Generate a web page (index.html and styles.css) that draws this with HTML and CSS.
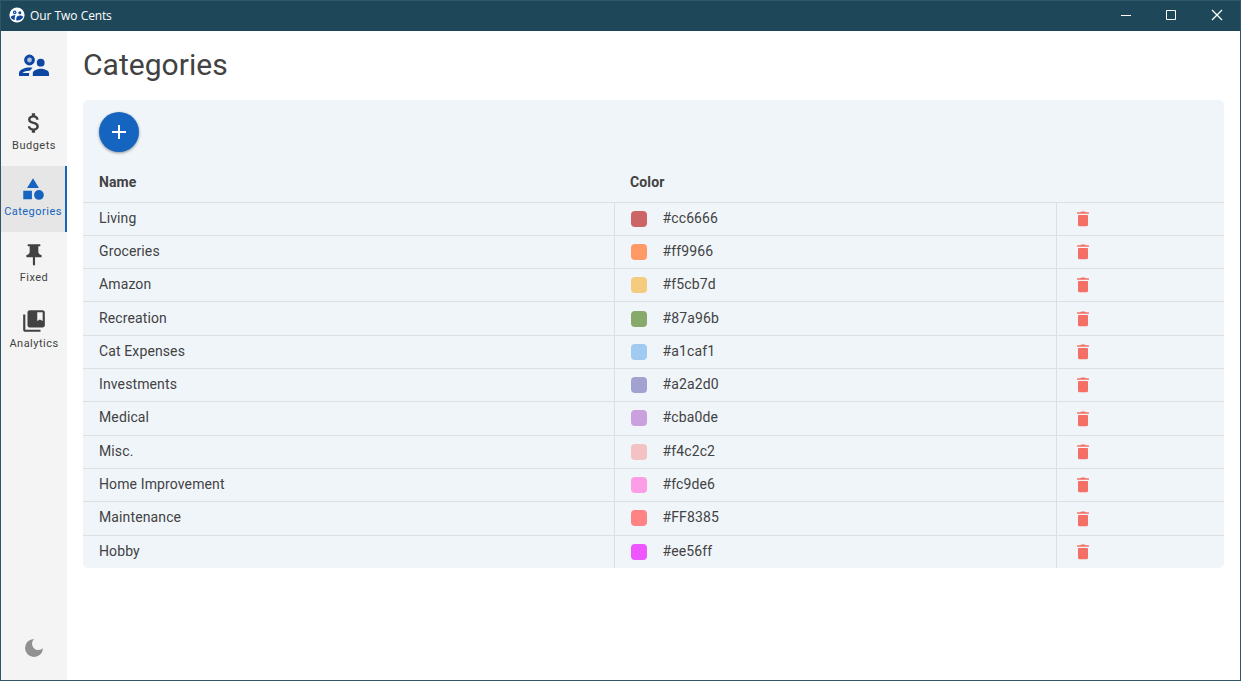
FILE: index.html
```
<!DOCTYPE html>
<html lang="en">
<head>
<meta charset="utf-8">
<title>Our Two Cents</title>
<link rel="stylesheet" href="styles.css">
</head>
<body>
<div class="window">
  <header class="titlebar">
    <svg class="app-icon" viewBox="0 0 16 16"><circle cx="8" cy="8" r="7.6" fill="#fff"/><g fill="#0d47a1"><circle cx="5.7" cy="5.4" r="1.8"/><circle cx="10.8" cy="5.7" r="1.5"/><path d="M1.700 9.900c1-1.400 2.800-1.800 5.100-1.600-.8.700-1.100 1.700-1.100 4.600C3.800 12.600 2.200 11.600 1.700 9.900zM7.300 13.500v-2.500c0-1.600 2-2.500 3.500-2.500 1.300 0 2.700.4 3.400 1.200-.9 2.400-3.200 4-6.900 3.800z"/></g><circle cx="5.700" cy="5.400" r=".6" fill="#fff"/></svg>
    <span class="app-name">Our Two Cents</span>
    <div class="controls">
      <svg width="12" height="12" viewBox="0 0 12 12"><path d="M1 6.500h10"/></svg>
      <svg width="12" height="12" viewBox="0 0 12 12"><path d="M1.500 1.500h9v9h-9z"/></svg>
      <svg width="12" height="12" viewBox="0 0 12 12"><path d="M1 1l10 10M11 1L1 11"/></svg>
    </div>
  </header>
  <div class="body">
    <nav class="sidebar">
      <svg class="logo" viewBox="0 0 30 22"><circle cx="10.500" cy="6" r="3.900" fill="#b4c3df" stroke="#0d47a1" stroke-width="3"/><g fill="#0d47a1"><circle cx="21.700" cy="8.700" r="3.900"/><path d="M0 22v-2.800c0-3.800 6.500-5.700 10.500-5.700 1 0 2 .1 3.100.300l-2.800 3c-3.500-.2-6.500 1-7.300 2.200h6.800c-.2.600-.3 1.200-.3 3zM13.800 22v-2.500c0-3.200 5-4.700 8.100-4.700s8.100 1.500 8.100 4.700V22z"/></g></svg>
      <a class="item"><svg viewBox="0 0 24 24"><path d="M11.800 10.900c-2.270-.59-3-1.200-3-2.150 0-1.090 1.010-1.850 2.700-1.850 1.780 0 2.440.85 2.500 2.100h2.210c-.07-1.720-1.120-3.300-3.210-3.810V3h-3v2.160c-1.940.42-3.500 1.680-3.500 3.610 0 2.310 1.910 3.460 4.700 4.130 2.500.6 3 1.480 3 2.410 0 .69-.49 1.790-2.700 1.790-2.060 0-2.870-.92-2.980-2.100h-2.200c.12 2.190 1.760 3.420 3.680 3.830V21h3v-2.150c1.950-.37 3.500-1.500 3.500-3.550 0-2.840-2.430-3.810-4.700-4.400z"/></svg><span>Budgets</span></a>
      <a class="item active"><svg viewBox="0 0 24 24"><path d="M12 2l-5.500 9h11zM3 13.500h8v8H3z"/><circle cx="17.500" cy="17.500" r="4.500"/></svg><span>Categories</span></a>
      <a class="item"><svg viewBox="0 0 24 24"><path d="M16 9V4h1c.55 0 1-.45 1-1s-.45-1-1-1H7c-.55 0-1 .45-1 1s.45 1 1 1h1v5c0 1.660-1.340 3-3 3v2h5.970v7l1 1 1-1v-7H19v-2c-1.660 0-3-1.340-3-3z"/></svg><span>Fixed</span></a>
      <a class="item"><svg viewBox="0 0 24 24"><path d="M4 6H2v14c0 1.100.9 2 2 2h14v-2H4V6zM20 2H8c-1.100 0-2 .9-2 2v12c0 1.100.9 2 2 2h12c1.100 0 2-.9 2-2V4c0-1.100-.9-2-2-2zm0 10l-2.500-1.500L15 12V4h5v8z"/></svg><span>Analytics</span></a>
      <svg class="moon" viewBox="0 0 18 18"><path d="M9 0a9 9 0 1 0 9 9.300A5.600 5.600 0 0 1 9 0z"/></svg>
    </nav>
    <main class="content">
      <h1>Categories</h1>
      <section class="card">
        <button class="add" aria-label="Add"><svg width="14" height="14" viewBox="0 0 14 14"><path d="M7 0v14M0 7h14"/></svg></button>
        <div class="head"><span>Name</span><span>Color</span></div>
        <div class="rows" id="rows"></div>
      </section>
    </main>
  </div>
</div>
<script src="app.js"></script>
</body>
</html>
```
FILE: styles.css
```
* { box-sizing: border-box; }
body { margin: 0; font-family: Roboto, sans-serif; color: #424242; }
.window { width: 1241px; height: 681px; border: 1px solid #2d5666; border-top: 0; background: #fff; display: flex; flex-direction: column; overflow: hidden; }
.titlebar { height: 31px; flex: none; background: #1e485a; border-top: 1px solid #2f5968; color: #fff; display: flex; align-items: center; padding: 0 17px 2px 8px; }
.app-icon { width: 16px; height: 16px; }
.app-name { font: 12px "Open Sans", sans-serif; margin-left: 5px; letter-spacing: -.45px; word-spacing: .5px; padding-top: 1px; letter-spacing: -.15px; }
.controls { display: flex; gap: 33px; margin-left: auto; }
.controls svg { fill: none; stroke: #fff; stroke-width: 1; }
.controls svg:last-child { margin-left: 1px; stroke-width: 1.3; }
.body { display: flex; flex: 1; min-height: 0; }
.sidebar { width: 66px; background: #f4f4f4; display: flex; flex-direction: column; align-items: center; padding: 23px 0 23px; }
.logo { width: 30px; height: 22px; flex: none; margin-bottom: 24px; }
.item { width: 66px; height: 66px; flex: none; display: flex; flex-direction: column; align-items: center; padding-top: 10px; font-size: 11px; line-height: 16px; letter-spacing: .48px; border-right: 2px solid transparent; padding-left: 2px; }
.item svg { width: 26px; height: 26px; fill: currentColor; }
.item span { margin-top: 2px; white-space: nowrap; }
.active { background: #e6e6e6; color: #1565c0; border-right-color: #1565c0; padding-left: 0; }
.moon { width: 18px; height: 18px; margin-top: auto; fill: #919191; }
.content { flex: 1; padding: 16px 16px 0; }
h1 { margin: 0; font-size: 30px; line-height: 36px; font-weight: 400; letter-spacing: .03px; }
.card { margin-top: 17px; background: #f0f5fa; border-radius: 5px; overflow: hidden; height: 468px; }
.add { display: flex; align-items: center; justify-content: center; margin: 12px 0 0 16px; width: 40px; height: 40px; border: 0; padding: 0; border-radius: 50%; background: #1565c0; box-shadow: 0 1px 3px rgba(0,0,0,.4); }
.add svg { fill: none; stroke: #fff; stroke-width: 2; }
.head, .row { display: grid; grid-template-columns: 531px 442px 1fr; letter-spacing: .12px; }
.head { height: 49.600px; padding-left: 16px; font-size: 14px; line-height: 20px; font-weight: 700; padding-top: 20px; }
.row { height: 33.300px; border-top: 1px solid #dedfe1; font-size: 14px; line-height: 20px; }
.name { padding: 5.100px 16px 0; border-right: 1px solid #dedfe1; width: 532px; }
.color { display: flex; align-items: flex-start; padding: 5.100px 0 0 17px; border-right: 1px solid #dedfe1; width: 443px; }
.swatch { width: 16px; height: 16px; border-radius: 4px; margin: 3px 15.500px 0 0; }
.trash { width: 20px; height: 20px; margin: 6.250px 0 0 17px; fill: #f47067; }
```
FILE: app.js
```
const categories = [
  ["Living", "#cc6666"], ["Groceries", "#ff9966"], ["Amazon", "#f5cb7d"],
  ["Recreation", "#87a96b"], ["Cat Expenses", "#a1caf1"], ["Investments", "#a2a2d0"],
  ["Medical", "#cba0de"], ["Misc.", "#f4c2c2"], ["Home Improvement", "#fc9de6"],
  ["Maintenance", "#FF8385"], ["Hobby", "#ee56ff"]
];
document.getElementById("rows").innerHTML = categories.map(([name, color]) => `
  <div class="row">
    <div class="name">${name}</div>
    <div class="color"><i class="swatch" style="background:${color}"></i>${color}</div>
    <svg class="trash" viewBox="0 0 20 20"><path d="M5 6.800Q5 6 5.800 6h8.400Q15 6 15 6.800v9a1.500 1.500 0 0 1-1.500 1.500h-7A1.500 1.500 0 0 1 5 15.800zM4.600 3.300h2.700l1.100-.9h3.200l1.100.9h2.700q.6 0 .6.600v.9H4v-.9q0-.6.6-.6z"/></svg>
  </div>`).join("");
```
